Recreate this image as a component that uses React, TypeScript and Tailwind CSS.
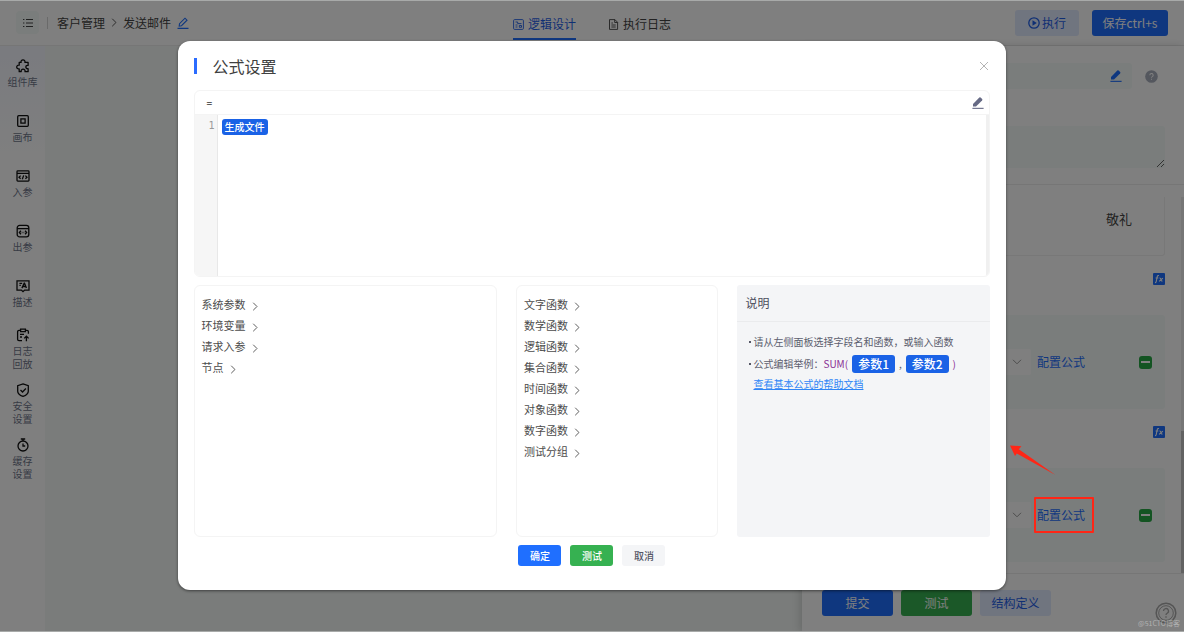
import type { ReactNode } from "react";

const NAV_ITEMS: { key: string; lines: string[] }[] = [
  { key: "components", lines: ["组件库"] },
  { key: "canvas", lines: ["画布"] },
  { key: "input", lines: ["入参"] },
  { key: "output", lines: ["出参"] },
  { key: "desc", lines: ["描述"] },
  { key: "replay", lines: ["日志", "回放"] },
  { key: "security", lines: ["安全", "设置"] },
  { key: "cache", lines: ["缓存", "设置"] },
];

const VARIABLES = ["系统参数", "环境变量", "请求入参", "节点"];

const FUNCTIONS = [
  "文字函数",
  "数学函数",
  "逻辑函数",
  "集合函数",
  "时间函数",
  "对象函数",
  "数字函数",
  "测试分组",
];

const NAV_ICONS: Record<string, ReactNode> = {
  components: (
    <path
      d="M3.2 3.4h1.9a2 2 0 1 1 3.8 0h3.2v3a1.7 1.7 0 1 0 0 3.2v3.1H9a2 2 0 1 0-3.8 0h-2V9.8a1.9 1.9 0 1 1 0-3.6z"
      strokeLinejoin="round"
    />
  ),
  canvas: (
    <>
      <rect x="1.7" y="1.7" width="10.6" height="10.6" rx="1" />
      <rect x="4.9" y="4.9" width="4.2" height="4.2" />
    </>
  ),
  input: (
    <>
      <rect x="1" y="1.9" width="12" height="10.2" rx="0.8" />
      <path d="M1 4.4h12M4.6 6.6 3 8.2l1.6 1.6M9.4 6.6 11 8.2 9.4 9.8M7.7 6.4l-1.4 3.8" />
    </>
  ),
  output: (
    <>
      <rect x="1.2" y="1.4" width="11.6" height="11.4" rx="2.4" />
      <path d="M1.2 4.6h11.6M4.9 6.8 3.4 8.5l1.5 1.7M9.1 6.8l1.5 1.7-1.5 1.7M5.8 8.5h.6M7.6 8.5h.6" />
    </>
  ),
  desc: (
    <>
      <path d="M1 1.9h12v9.2H8.6L7 12.7l-1.6-1.6H1z" />
      <path d="M3.4 4.3h2.8M3.4 6.4h1.4M5.9 9.1l2.3-4.9h.3l1.9 4.9M6.8 7.5h3" />
    </>
  ),
  replay: (
    <path d="M4.4 2.4H3A1.4 1.4 0 0 0 1.6 3.8v7.4A1.4 1.4 0 0 0 3 12.6h3M9.6 2.4H11a1.4 1.4 0 0 1 1.4 1.4v2M4.6 1.2h4.8v2.4H4.6zM4 6.4h4M4 9h2M10.4 13.2V8.4M8.2 10.4l2.2-2.2 2.2 2.2" />
  ),
  security: (
    <>
      <path d="M7 .9 12.3 2.6v5.6c0 2.5-2.6 4.2-5.3 5.2-2.7-1-5.3-2.7-5.3-5.2V2.6z" />
      <path d="m4.5 7 2 2 3.4-3.5" />
    </>
  ),
  cache: (
    <>
      <circle cx="7" cy="8" r="5" />
      <path d="M4.8 1h4.4M7 1v2M7 5.4V8h2.2" />
    </>
  ),
};

function ChevronRight({ className }: { className: string }) {
  return (
    <svg viewBox="0 0 6 10" fill="none" stroke="currentColor" strokeWidth="1" className={className}>
      <path d="M1 .8 5.2 5 1 9.2" />
    </svg>
  );
}

function PencilFilled({ className }: { className: string }) {
  return (
    <svg viewBox="0 0 12 12" fill="currentColor" className={className}>
      <path d="M1 9.5V6.9L7.3.6a1 1 0 0 1 1.3 0l1.5 1.4a1 1 0 0 1 0 1.4L4 9.5z" />
      <rect x="0.4" y="10.8" width="11.2" height="1.1" />
    </svg>
  );
}

function QuestionMark() {
  return (
    <svg viewBox="0 0 14 14" className="size-[13px] shrink-0">
      <circle cx="7" cy="7" r="6.8" fill="#a9aebc" />
      <path
        d="M5.2 5.6a1.8 1.8 0 1 1 2.7 1.5c-.6.3-.9.6-.9 1.2M7 9.4v1.1"
        fill="none"
        stroke="#fff"
        strokeWidth="1.1"
      />
    </svg>
  );
}

function Header() {
  return (
    <header className="grid h-[46px] shrink-0 grid-cols-[1fr_auto_1fr] items-center border-b border-[#ececec] px-4 text-xs text-[#444]">
      <div className="flex items-center">
        <button type="button" aria-label="菜单" className="flex size-[23px] items-center justify-center rounded bg-[#f4faf8]">
          <svg viewBox="0 0 10 10" fill="none" stroke="#444" strokeWidth="1" className="size-[10px]">
            <path d="M3 1.5h7M3 5h7M3 8.5h7M0 1.5h1.4M0 5h1.4M0 8.5h1.4" />
          </svg>
        </button>
        <span className="ml-2 h-3 w-px bg-[#d5d5d5]" />
        <nav className="ml-[9px] flex items-center">
          <a href="#customers">客户管理</a>
          <ChevronRight className="mx-[6px] h-[9px] w-[6px]" />
          <span>发送邮件</span>
        </nav>
        <button type="button" aria-label="重命名" className="ml-[6px] text-[#1f6fff]">
          <svg viewBox="0 0 12 12" fill="none" stroke="currentColor" strokeWidth="1.1" className="size-3">
            <path d="M2.2 9 2.5 6.7 8 1.2l2 2L4.5 8.7zM.5 11.4h11" />
          </svg>
        </button>
      </div>
      <div className="flex h-full items-start gap-8 pt-2">
        <button type="button" className="flex h-8 items-center gap-1 border-b-2 border-[#1f6fff] pt-[2px] text-[#1f5fe8]">
          <svg viewBox="0 0 11 11" fill="none" stroke="currentColor" strokeWidth="0.9" className="size-[11px]">
            <rect x="0.6" y="0.6" width="9.8" height="9.8" rx="1" />
            <path d="M2.5 3h2.2v1.6H8.5M2.5 6h2M6.3 6.5h2.2v1.8H6.3zM2.5 8h2" />
          </svg>
          逻辑设计
        </button>
        <button type="button" className="flex h-8 items-center gap-1 border-b-2 border-transparent pt-[2px]">
          <svg viewBox="0 0 11 11" fill="none" stroke="currentColor" strokeWidth="0.9" className="size-[11px]">
            <path d="M1.5.6h5.4l2.7 2.7v7.1H1.5zM6.7.6v2.9h2.9M3.4 4h1.5M3.4 6h4.3M3.4 8h4.3" />
          </svg>
          执行日志
        </button>
      </div>
      <div className="flex justify-end gap-[13px]">
        <button type="button" className="flex h-[26px] w-16 items-center justify-center gap-[2px] rounded-[3px] bg-[#e1eaff] text-[#1f5fe8]">
          <svg viewBox="0 0 12 12" fill="none" stroke="currentColor" strokeWidth="1.3" className="size-3">
            <circle cx="6" cy="6" r="5.2" />
            <path d="M4.5 3.3 8.8 6 4.5 8.7z" fill="currentColor" stroke="none" />
          </svg>
          执行
        </button>
        <button type="button" className="h-[26px] w-[76px] rounded-[3px] bg-[#1f6fff] text-white">
          保存ctrl+s
        </button>
      </div>
    </header>
  );
}

function Sidebar() {
  return (
    <aside className="w-[45px] shrink-0 bg-linear-to-b from-[#f4f6ff] via-white via-20% to-white">
      {NAV_ITEMS.map((item) => (
        <button
          key={item.key}
          type="button"
          className="flex h-[55px] w-full flex-col items-center justify-center gap-[2px] text-[10px] leading-[13px] text-[#6f768a]"
        >
          <svg viewBox="0 0 14 14" fill="none" stroke="#111" strokeWidth="1.3" className="size-[14px]">
            {NAV_ICONS[item.key]}
          </svg>
          <span>
            {item.lines.map((line) => (
              <span key={line} className="block">
                {line}
              </span>
            ))}
          </span>
        </button>
      ))}
    </aside>
  );
}

function ParamRow({ label }: { label: string }) {
  return (
    <section>
      <div className="mt-[17px] flex justify-end">
        <button type="button" aria-label="函数" className="flex size-3 items-center justify-center rounded-[1px] bg-[#1f6fff]">
          <svg viewBox="0 0 12 12" fill="none" stroke="#fff" strokeWidth="1.1" className="size-3">
            <path d="M6 2.6c-1.2-.3-1.6.3-1.8 1.3L3.2 8.6c-.2.9-.6 1.1-1.2 1M2.6 5h2.7M6.5 5c1.2-.2 1.3.8 1.5 1.7s.5 1.6 1.5 1.3M9.9 5.1 6.1 8.3" />
          </svg>
        </button>
      </div>
      <div className="mt-[30px] flex h-[94px] items-center rounded-[3px] bg-[#f4faf8] pr-[13px] pl-4">
        <div className="relative flex-1">
          <select aria-label={label} className="block h-[26px] w-full appearance-none rounded-[2px] bg-white px-2 text-xs text-[#333]" />
          <svg viewBox="0 0 10 6" fill="none" stroke="#999" className="pointer-events-none absolute top-[10px] right-[9px] h-[6px] w-[10px]">
            <path d="M1 .8 5 4.8 9 .8" />
          </svg>
        </div>
        <button type="button" className="ml-[6px] text-xs text-[#1f6fff]">
          配置公式
        </button>
        <button type="button" aria-label="删除" className="ml-[54px] flex size-[13px] items-center justify-center rounded-[3px] bg-[#27a845]">
          <span className="h-[2px] w-[9px] bg-white" />
        </button>
      </div>
    </section>
  );
}

function NodePanel() {
  return (
    <aside className="flex w-[382px] shrink-0 flex-col bg-white shadow-[-2px_0_8px_rgba(0,0,0,0.15)]">
      <div className="border-b border-[#ececec] pt-[17px] pr-[19px] pb-4 pl-5">
        <div className="flex items-center gap-[13px] pr-[7px]">
          <div className="flex h-[26px] flex-1 items-center rounded-[3px] bg-[#f4faf8] pr-[10px]">
            <input aria-label="节点名称" className="h-full min-w-0 flex-1 px-2 text-xs outline-none" />
            <button type="button" aria-label="编辑名称" className="text-[#1f6fff]">
              <PencilFilled className="size-3" />
            </button>
          </div>
          <QuestionMark />
        </div>
        <textarea aria-label="节点描述" className="mt-[37px] block h-[42px] w-full resize-y rounded-[3px] bg-[#f4faf8] p-2 text-xs outline-none" />
      </div>
      <div className="flex min-h-0 flex-1">
        <div className="min-w-0 flex-1 overflow-hidden pr-4 pl-5">
          <div className="mt-3 h-[59px] rounded-b-[3px] border-x border-b border-[#f0f0f0] pt-3 pr-8 text-right text-[13px] leading-5 text-[#444]">
            敬礼
          </div>
          <ParamRow label="收件人" />
          <ParamRow label="附件" />
        </div>
        <div className="mt-3 flex w-[3px] flex-col justify-end bg-[#ededed]">
          <span className="h-[142px] bg-[#c4c4c4]" />
        </div>
      </div>
      <footer className="flex h-[59px] shrink-0 items-center gap-2 border-t border-[#ececec] pl-5 text-xs">
        <button type="button" className="h-[26px] w-[71px] rounded-[3px] bg-[#1f6fff] text-white">
          提交
        </button>
        <button type="button" className="h-[26px] w-[71px] rounded-[3px] bg-[#36b151] text-white">
          测试
        </button>
        <button type="button" className="h-[26px] w-[71px] rounded-[3px] bg-[#e1eaff] text-[#1f5fe8]">
          结构定义
        </button>
      </footer>
    </aside>
  );
}

function TreeList({ items }: { items: string[] }) {
  return (
    <ul className="h-full rounded-md border border-[#f4f4f4] px-[7px] py-2">
      {items.map((item) => (
        <li key={item}>
          <button type="button" className="flex h-[21px] items-center gap-[6px] text-[11px] text-[#4c4c4c]">
            {item}
            <ChevronRight className="mt-1 h-[9px] w-[6px]" />
          </button>
        </li>
      ))}
    </ul>
  );
}

function ParamChip({ children }: { children: ReactNode }) {
  return <span className="rounded-[3px] bg-[#1a62e6] px-[6px] text-xs leading-[18px] font-medium text-white">{children}</span>;
}

function HelpPanel() {
  return (
    <section className="h-full rounded-[3px] bg-[#f4f5f7]">
      <h3 className="border-b border-[#eaebed] px-2 text-xs leading-9 text-[#4b4d5c]">说明</h3>
      <ul className="px-3 pt-[9px] text-[10px] leading-[22px] text-[#5c5e6e]">
        <li className="flex items-center gap-[2px]">
          <span className="size-[2px] bg-[#555766]" />
          请从左侧面板选择字段名和函数，或输入函数
        </li>
        <li className="flex items-center">
          <span className="mr-[2px] size-[2px] bg-[#555766]" />
          公式编辑举例：
          <span className="mr-1 text-[#8a2f94]">SUM(</span>
          <ParamChip>参数1</ParamChip>
          <span className="mx-1">,</span>
          <ParamChip>参数2</ParamChip>
          <span className="ml-1 text-[#8a2f94]">)</span>
        </li>
        <li className="pl-1 leading-[18px]">
          <a href="#help" className="text-[#2f86f6] underline">
            查看基本公式的帮助文档
          </a>
        </li>
      </ul>
    </section>
  );
}

function FormulaDialog() {
  return (
    <div role="dialog" aria-label="公式设置" className="w-[70%] rounded-xl bg-white px-4 pt-[13px] pb-6 shadow-[0_1px_3px_rgba(0,0,0,0.5)]">
      <div className="flex h-6 items-center">
        <span className="h-4 w-[3px] bg-[#2b6cff]" />
        <h2 className="ml-4 flex-1 text-base leading-[22px] text-[#404040]">公式设置</h2>
        <button type="button" aria-label="关闭" className="mr-px">
          <svg viewBox="0 0 10 10" fill="none" stroke="#b4b4b4" className="size-[10px]">
            <path d="m1 1 8 8M9 1 1 9" />
          </svg>
        </button>
      </div>
      <div className="mt-3 overflow-hidden rounded-md border border-[#f4f4f4]">
        <div className="flex h-6 items-center justify-between border-b border-[#f4f4f4] pr-[5px] pl-3 text-[10px] text-[#333]">
          <span className="font-medium">=</span>
          <button type="button" aria-label="编辑公式" className="text-[#666a85]">
            <PencilFilled className="size-3" />
          </button>
        </div>
        <div className="flex h-[161px]">
          <div className="w-[23px] border-r border-[#e8e8e8] bg-[#f6f6f6] pr-[2px] text-right font-['DejaVu_Sans_Mono',monospace] text-[10px] leading-[22px] text-[#999]">
            1
          </div>
          <div className="flex flex-1 items-start px-1 pt-1">
            <span className="rounded-[3px] bg-[#1a62e6] px-[3px] text-[10px] leading-4 font-medium text-white">
              生成文件
            </span>
          </div>
          <div className="w-[3px] bg-[#f0f0f0]" />
        </div>
      </div>
      <div className="mt-2 grid h-[252px] grid-cols-[6fr_4fr_5fr] gap-[19px]">
        <TreeList items={VARIABLES} />
        <TreeList items={FUNCTIONS} />
        <HelpPanel />
      </div>
      <div className="mt-2 flex justify-center gap-[9px] text-[10px] font-medium">
        <button type="button" className="h-[21px] w-[43px] rounded-[3px] bg-[#1f6fff] text-white">
          确定
        </button>
        <button type="button" className="h-[21px] w-[43px] rounded-[3px] bg-[#36b151] text-white">
          测试
        </button>
        <button type="button" className="h-[21px] w-[43px] rounded-[3px] bg-[#f4f5f7] text-[#555766]">
          取消
        </button>
      </div>
    </div>
  );
}

export default function App() {
  return (
    <div className="relative flex h-screen flex-col overflow-hidden bg-white font-['Noto_Sans_CJK_SC',sans-serif]">
      <Header />
      <div className="flex min-h-0 flex-1">
        <Sidebar />
        <main className="flex-1 bg-[#f4f8f6]" />
        <NodePanel />
      </div>
      <div className="absolute inset-0 flex items-start justify-center border-y border-[#a8aaa9] bg-black/50 pt-10">
        <FormulaDialog />
      </div>

      {/* callouts above the mask */}
      <div className="pointer-events-none absolute top-[497px] right-[90px] h-9 w-[60px] rounded-[1px] border-2 border-[#ff2616]" />
      <svg viewBox="0 0 46 31" fill="#ff2616" className="pointer-events-none absolute top-[445px] right-[128px] h-[31px] w-[46px]">
        <path d="M0 .5 11.5 1.2 8.8 4.2 45.5 30 6.8 8.6 5 11z" />
      </svg>
      <button type="button" aria-label="帮助" className="absolute right-[7px] bottom-2">
        <svg viewBox="0 0 22 22" fill="none" stroke="#555" className="size-[22px]">
          <circle cx="11" cy="11" r="9.8" strokeWidth="1.5" />
          <circle cx="11" cy="11" r="7.3" />
          <path d="M8.5 9a2.5 2.5 0 1 1 3.7 2.2c-.8.5-1.2.9-1.2 1.8M11 14.3v1.4" strokeWidth="1.3" />
        </svg>
      </button>
      <span className="pointer-events-none absolute right-1 bottom-[3px] text-[7px] leading-3 text-white/40">@51CTO博客</span>
    </div>
  );
}
